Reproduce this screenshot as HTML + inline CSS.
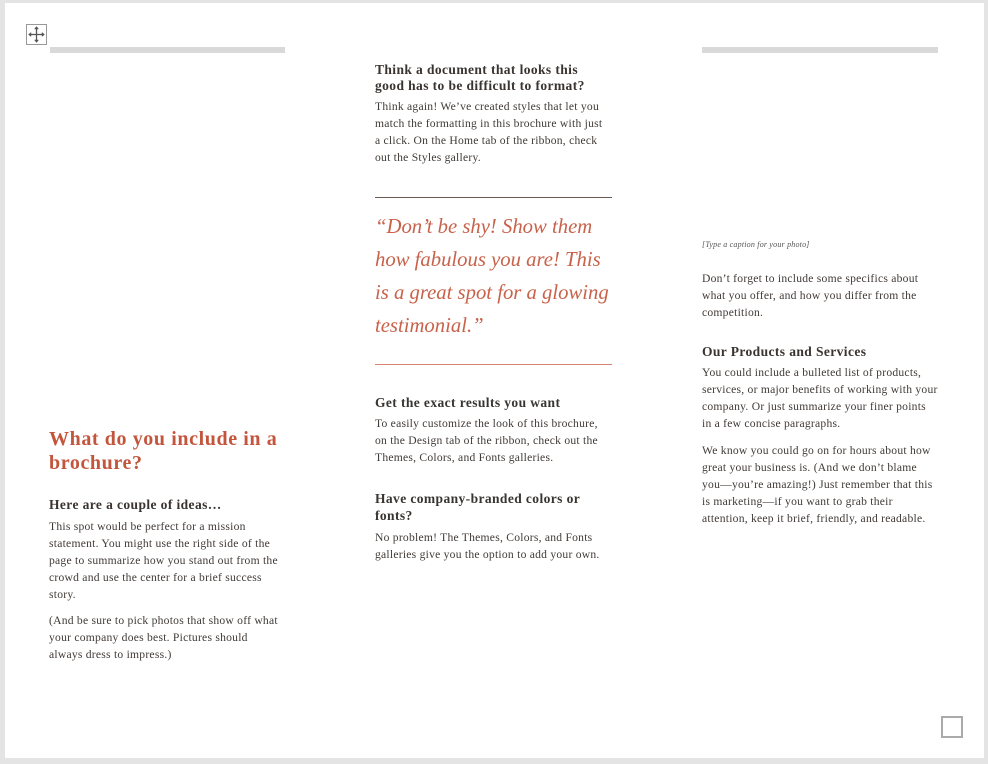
<!DOCTYPE html>
<html><head><meta charset="utf-8"><style>
body{margin:0;width:988px;height:764px;background:#fff;position:relative;overflow:hidden;font-family:"Liberation Serif",serif;color:#403a36}
.frame{position:absolute;left:0;top:0;width:988px;height:764px;box-sizing:border-box;border:solid #e4e4e4;border-width:3px 4px 6px 5px}
.a{position:absolute;white-space:nowrap}
.b{font-size:11.6px;line-height:17px;letter-spacing:0.24px}
.h{font-size:13.5px;font-weight:bold;line-height:16px;color:#3a3430;letter-spacing:0.4px}
.q{font-size:20.7px;font-style:italic;color:#c8624a;line-height:33px}
.bar{position:absolute;height:6px;background:#d9d9d9}
</style></head><body>
<div class="frame"></div>
<div style="position:absolute;left:26px;top:24px;width:21px;height:21px;border:1px solid #999;box-sizing:border-box;background:#fff">
<svg width="19" height="19" viewBox="0 0 19 19"><g stroke="#555" stroke-width="1.3" fill="#555"><line x1="9.5" y1="3" x2="9.5" y2="16"/><line x1="3" y1="9.5" x2="16" y2="9.5"/><path d="M9.5 1.5l-2 2.5h4z M9.5 17.5l-2-2.5h4z M1.5 9.5l2.5-2v4z M17.5 9.5l-2.5-2v4z" stroke-width="0.5"/></g></svg></div>
<div class="bar" style="left:50px;top:47px;width:235px"></div>
<div class="bar" style="left:702px;top:47px;width:236px"></div>

<div class="a" style="left:49px;top:427px;font-size:20px;letter-spacing:0.6px;font-weight:bold;color:#c4553d;line-height:24px">What do you include in a<br>brochure?</div>
<div class="a h" style="left:49px;top:497px">Here are a couple of ideas…</div>
<div class="a b" style="left:49px;top:518px">This spot would be perfect for a mission<br>statement. You might use the right side of the<br>page to summarize how you stand out from the<br>crowd and use the center for a brief success<br>story.</div>
<div class="a b" style="left:49px;top:612px">(And be sure to pick photos that show off what<br>your company does best. Pictures should<br>always dress to impress.)</div>

<div class="a h" style="left:375px;top:62px">Think a document that looks this<br>good has to be difficult to format?</div>
<div class="a b" style="left:375px;top:98px">Think again! We’ve created styles that let you<br>match the formatting in this brochure with just<br>a click. On the Home tab of the ribbon, check<br>out the Styles gallery.</div>
<div style="position:absolute;left:375px;top:197px;width:237px;height:1px;background:#6a5a52"></div>
<div class="a q" style="left:375px;top:211px">“Don’t be shy! Show them<br>how fabulous you are! This<br>is a great spot for a glowing<br>testimonial.”</div>
<div style="position:absolute;left:375px;top:364px;width:237px;height:1px;background:#d6846e"></div>
<div class="a h" style="left:375px;top:395px">Get the exact results you want</div>
<div class="a b" style="left:375px;top:415px">To easily customize the look of this brochure,<br>on the Design tab of the ribbon, check out the<br>Themes, Colors, and Fonts galleries.</div>
<div class="a h" style="left:375px;top:490px;line-height:17px">Have company-branded colors or<br>fonts?</div>
<div class="a b" style="left:375px;top:529px">No problem! The Themes, Colors, and Fonts<br>galleries give you the option to add your own.</div>

<div class="a" style="left:702px;top:240px;font-size:8px;letter-spacing:0.2px;font-style:italic;color:#555">[Type a caption for your photo]</div>
<div class="a b" style="left:702px;top:270px">Don’t forget to include some specifics about<br>what you offer, and how you differ from the<br>competition.</div>
<div class="a h" style="left:702px;top:344px">Our Products and Services</div>
<div class="a b" style="left:702px;top:364px">You could include a bulleted list of products,<br>services, or major benefits of working with your<br>company. Or just summarize your finer points<br>in a few concise paragraphs.</div>
<div class="a b" style="left:702px;top:442px">We know you could go on for hours about how<br>great your business is. (And we don’t blame<br>you—you’re amazing!) Just remember that this<br>is marketing—if you want to grab their<br>attention, keep it brief, friendly, and readable.</div>

<div style="position:absolute;left:941px;top:716px;width:22px;height:22px;border:2px solid #aaa;box-sizing:border-box"></div>
</body></html>
